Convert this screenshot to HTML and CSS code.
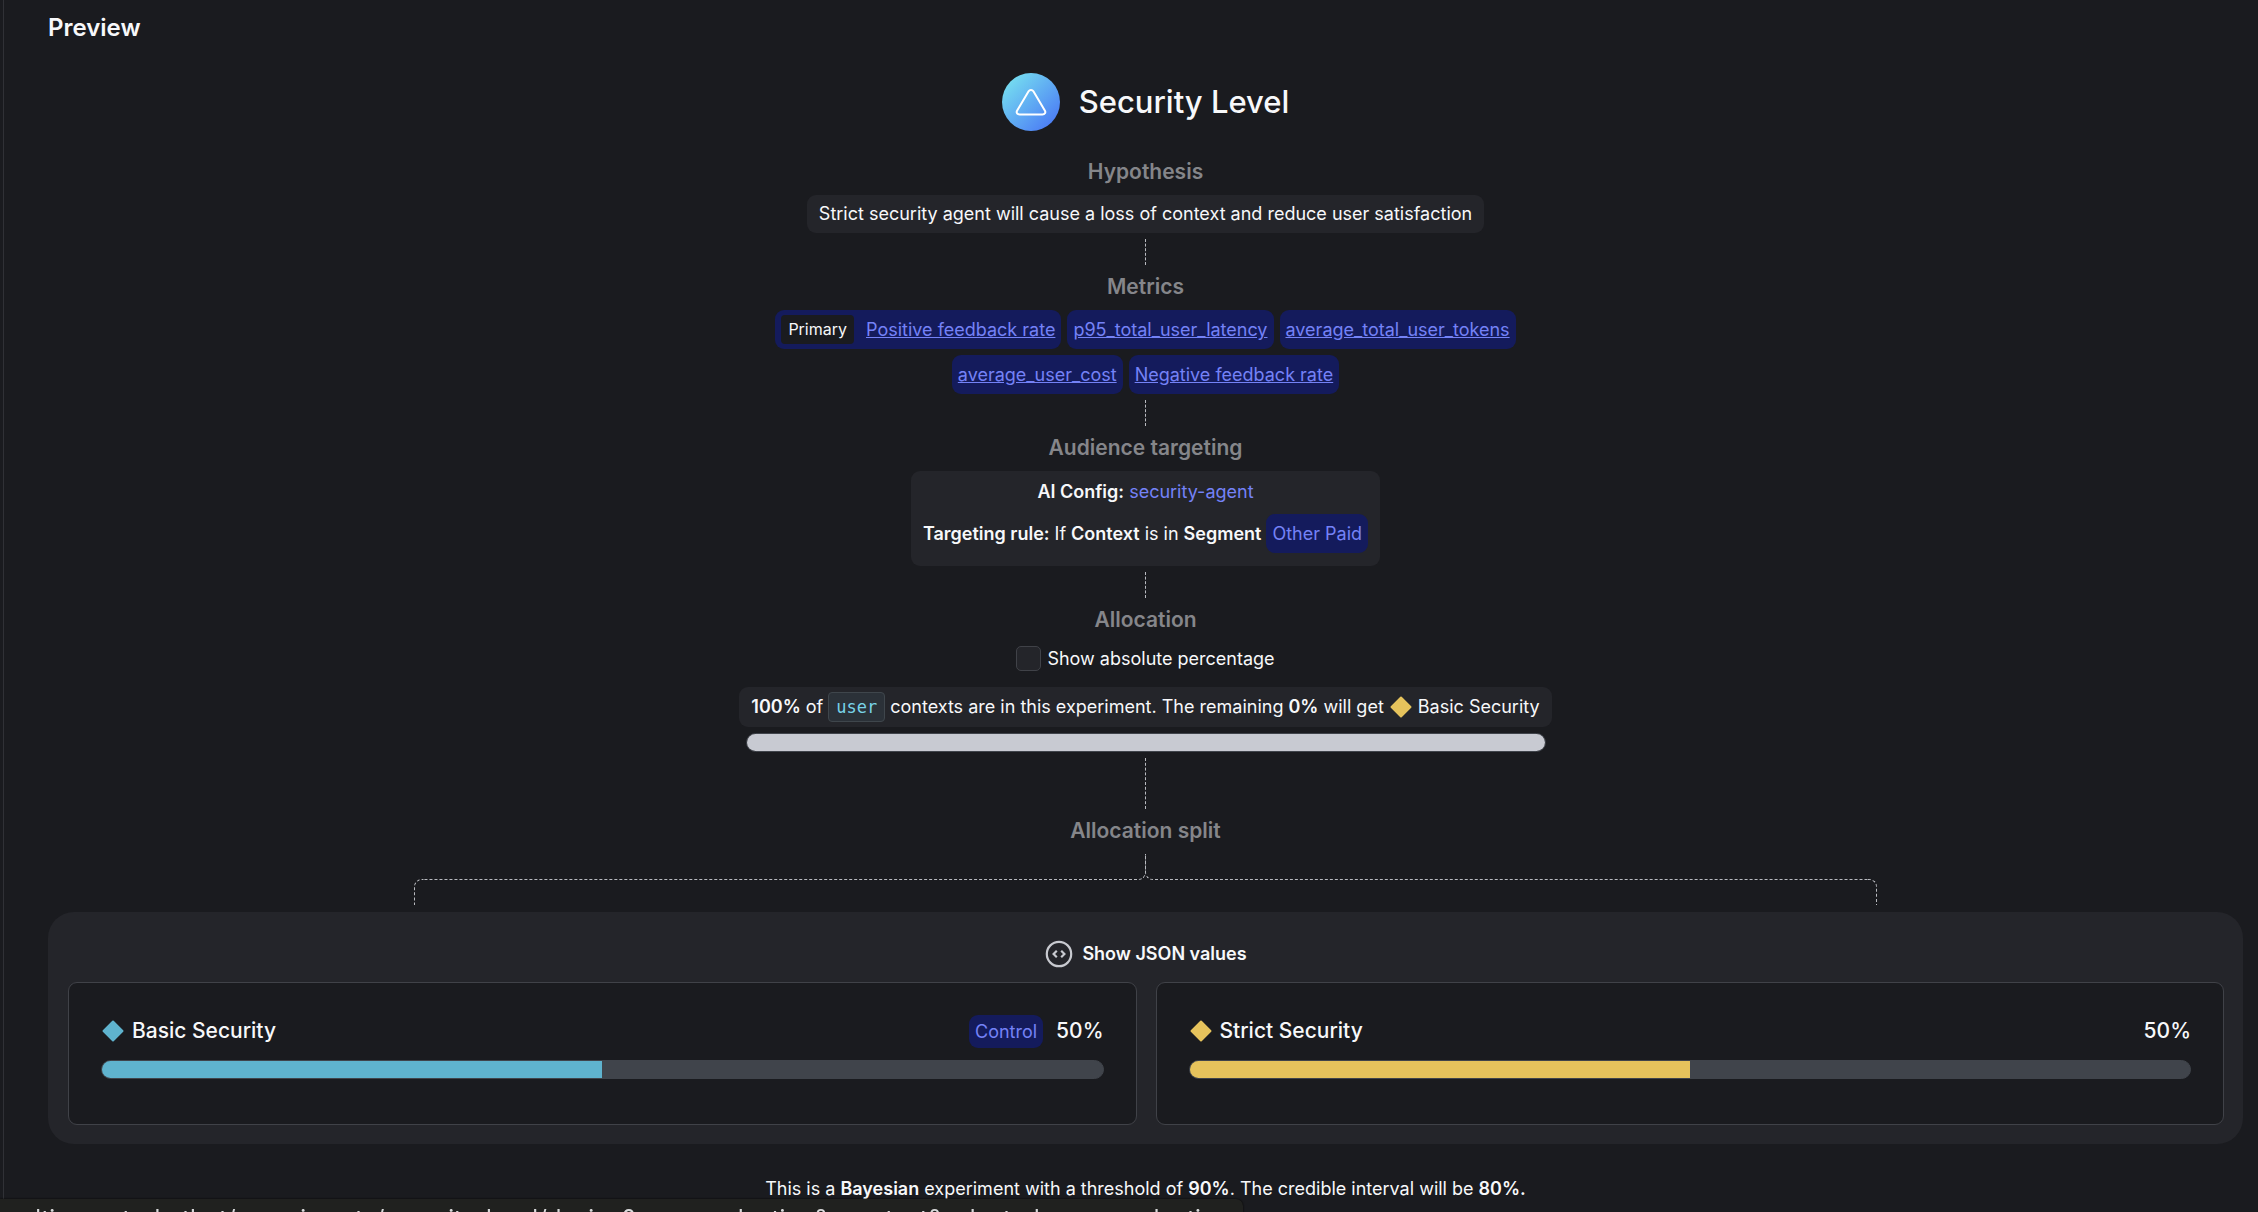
FILE: index.html
```html
<!DOCTYPE html>
<html lang="en">
<head>
  <meta charset="utf-8">
  <meta name="viewport" content="width=device-width, initial-scale=1">
  <title>Security Level – Preview</title>
  <link rel="stylesheet" href="styles.css">
</head>
<body>
  <main class="preview">
    <h2 class="preview-label">Preview</h2>

    <header class="title">
      <svg class="title-icon" viewBox="0 0 58 58" aria-hidden="true">
        <defs>
          <linearGradient id="badge" x1="0.1" y1="0.1" x2="0.9" y2="0.9">
            <stop offset="0" stop-color="#76dff0"/>
            <stop offset="1" stop-color="#4b7bf5"/>
          </linearGradient>
        </defs>
        <circle cx="29" cy="29" r="29" fill="url(#badge)"/>
        <path d="M26.6 18.3 15.2 37.400c-1.300 2.200.1 4.200 2.400 4.200h22.800c2.300 0 3.700-2 2.400-4.200L31.400 18.300c-1.100-1.900-3.700-1.900-4.800 0z" fill="none" stroke="#fff" stroke-width="2"/>
      </svg>
      <h1 class="title-text">Security Level</h1>
    </header>

    <h3 class="heading">Hypothesis</h3>
    <p class="box">Strict security agent will cause a loss of context and reduce user satisfaction</p>
    <div class="connector"></div>

    <h3 class="heading">Metrics</h3>
    <ul class="metrics">
      <li class="chip"><span class="primary">Primary</span><a class="metric-link" href="#">Positive feedback rate</a></li>
      <li class="chip"><a class="metric-link" href="#">p95_total_user_latency</a></li>
      <li class="chip"><a class="metric-link" href="#">average_total_user_tokens</a></li>
      <li class="chip"><a class="metric-link" href="#">average_user_cost</a></li>
      <li class="chip"><a class="metric-link" href="#">Negative feedback rate</a></li>
    </ul>
    <div class="connector"></div>

    <h3 class="heading">Audience targeting</h3>
    <div class="audience">
      <p class="audience-line"><b>AI Config:</b> <a class="config-link" href="#">security-agent</a></p>
      <p class="rule"><b>Targeting rule:</b><span>If</span><b>Context</b><span>is in</span><b>Segment</b><span class="chip">Other Paid</span></p>
    </div>
    <div class="connector"></div>

    <h3 class="heading">Allocation</h3>
    <label class="check"><input class="check-box" type="checkbox"> Show absolute percentage</label>
    <p class="box allocation"><b>100%</b><span>of</span><code class="context-kind">user</code><span>contexts are in this experiment. The remaining <b>0%</b> will get</span><svg class="diamond diamond-yellow" viewBox="0 0 24 24" aria-hidden="true"><path d="M12 2.500 21.500 12 12 21.500 2.500 12z"/></svg><span>Basic Security</span></p>
    <div class="bar bar-total"><div class="bar-fill fill-grey" style="width:100%"></div></div>
    <div class="connector connector-long"></div>

    <h3 class="heading">Allocation split</h3>
    <div class="bracket">
      <div class="corner corner-left"></div>
      <div class="arm arm-left"></div>
      <div class="arm arm-right"></div>
      <div class="corner corner-right"></div>
    </div>

    <section class="variations">
      <button class="json-button" type="button">
        <svg class="json-icon" viewBox="0 0 28 28" fill="none" stroke="#c8cad0" aria-hidden="true">
          <circle cx="14" cy="14" r="12.200" stroke-width="2.200"/>
          <path d="M11.800 10.800 8.600 14l3.200 3.200M16.200 10.800 19.400 14l-3.200 3.200" stroke-width="2.200"/>
        </svg>
        Show JSON values
      </button>
      <div class="cards">
        <article class="card">
          <div class="card-head">
            <svg class="diamond diamond-blue" viewBox="0 0 24 24" aria-hidden="true"><path d="M12 2.500 21.500 12 12 21.500 2.500 12z"/></svg>
            <h4 class="card-name">Basic Security</h4>
            <span class="chip chip-small">Control</span>
            <span class="percent">50%</span>
          </div>
          <div class="bar"><div class="bar-fill fill-blue" style="width:50%"></div></div>
        </article>
        <article class="card">
          <div class="card-head">
            <svg class="diamond diamond-yellow" viewBox="0 0 24 24" aria-hidden="true"><path d="M12 2.500 21.500 12 12 21.500 2.500 12z"/></svg>
            <h4 class="card-name">Strict Security</h4>
            <span class="percent">50%</span>
          </div>
          <div class="bar"><div class="bar-fill fill-yellow" style="width:50%"></div></div>
        </article>
      </div>
    </section>

    <p class="summary">This is a <b>Bayesian</b> experiment with a threshold of <b>90%</b>. The credible interval will be <b>80%.</b></p>
  </main>
  <div class="link-status">multi-agent-chatbot/experiments/security-level/design?env=production&amp;env=test&amp;selected-env=production</div>
</body>
</html>
```
FILE: styles.css
```css
:root {
  --bg: #1a1b1f;
  --surface: #24252a;
  --border: #404248;
  --text: #f7f8fa;
  --muted: #85868a;
  --link: #7482f7;
  --chip: #141b5c;
  --track: #40444b;
  --line: #b9bbc0;
}

* {
  box-sizing: border-box;
}

body {
  margin: 0;
  height: 100vh;
  overflow: hidden;
  background: var(--bg);
  color: var(--text);
  font: 400 18px/24px Inter, "Liberation Sans", sans-serif;
}

h1, h2, h3, h4, p, ul {
  margin: 0;
  padding: 0;
}

b {
  font-weight: 600;
}

.preview {
  display: flex;
  flex-direction: column;
  align-items: center;
  min-height: 100vh;
  margin-left: 3px;
  padding: 12px 15px 0 44px;
  border-left: 1px solid #303136;
}

.preview-label {
  align-self: flex-start;
  font-size: 24px;
  line-height: 32px;
  font-weight: 600;
}

.title {
  display: flex;
  align-items: center;
  gap: 19px;
  margin: 29px 0 19px;
}

.title-icon {
  width: 58px;
  height: 58px;
}

.title-text {
  font-size: 31px;
  line-height: 40px;
  font-weight: 500;
}

.heading {
  margin: 9px 0 10px;
  color: var(--muted);
  font-size: 21px;
  line-height: 26px;
  font-weight: 600;
}

.box {
  padding: 7px 12px;
  border-radius: 9px;
  background: var(--surface);
}

.connector {
  height: 26px;
  margin-top: 6px;
  border-left: 1px dashed var(--line);
}

.connector-long {
  height: 51px;
}

.metrics {
  display: flex;
  flex-wrap: wrap;
  justify-content: center;
  gap: 6px;
  max-width: 800px;
  list-style: none;
}

.chip {
  display: flex;
  align-items: center;
  padding: 7px 6px;
  border-radius: 9px;
  background: var(--chip);
  color: var(--link);
  line-height: 25px;
}

.primary {
  margin: -4px 12px -4px 0;
  padding: 2px 7px;
  border-radius: 4px;
  background: var(--bg);
  color: var(--text);
  font-size: 16px;
}

.metric-link {
  color: var(--link);
  text-decoration: underline;
}

.audience {
  display: flex;
  flex-direction: column;
  align-items: center;
  gap: 10px;
  padding: 9px 12px 13px;
  border-radius: 9px;
  background: var(--surface);
}

.config-link {
  color: var(--link);
  text-decoration: none;
}

.rule,
.allocation {
  display: flex;
  align-items: center;
  gap: 5px;
}

.check {
  display: flex;
  align-items: center;
  gap: 6px;
  margin: 3px 0 16px;
}

.check-box {
  appearance: none;
  width: 25px;
  height: 25px;
  margin: 0;
  border: 1px solid var(--border);
  border-radius: 5px;
  background: var(--surface);
}

.allocation {
  padding: 5px 12px;
}

.context-kind {
  padding: 2px 7px;
  border: 1px solid #3f464c;
  border-radius: 4px;
  background: #2b3138;
  color: #78d3e8;
  font: 17px/24px "DejaVu Sans Mono", monospace;
}

.diamond {
  flex: none;
  width: 24px;
  height: 24px;
  stroke-width: 2px;
  stroke-linejoin: round;
}

.diamond-yellow {
  fill: #e6c35c;
  stroke: #e6c35c;
}

.diamond-blue {
  fill: #5fb3ce;
  stroke: #5fb3ce;
}

.bar {
  width: 100%;
  height: 19px;
  border: 1px solid var(--track);
  border-radius: 10px;
  background: var(--track);
  overflow: hidden;
}

.bar-total {
  max-width: 800px;
  margin-top: 6px;
}

.bar-fill {
  height: 100%;
}

.fill-grey {
  background: #c8cad2;
}

.fill-blue {
  background: #5fb3ce;
}

.fill-yellow {
  background: #e6c35c;
}

.bracket {
  display: flex;
  width: calc(100% * 2 / 3);
  height: 51px;
}

.arm {
  flex: 1;
  height: 26px;
  border: 0 dashed var(--line);
  border-bottom-width: 1px;
}

.arm-left {
  border-right-width: 1px;
  border-bottom-right-radius: 8px;
}

.arm-right {
  margin-left: -1px;
  border-left-width: 1px;
  border-bottom-left-radius: 8px;
}

.corner {
  align-self: flex-end;
  width: 9px;
  height: 26px;
  border: 0 dashed var(--line);
  border-top-width: 1px;
}

.corner-left {
  border-left-width: 1px;
  border-top-left-radius: 8px;
}

.corner-right {
  border-right-width: 1px;
  border-top-right-radius: 8px;
}

.variations {
  display: flex;
  flex-direction: column;
  align-items: center;
  width: 100%;
  margin-top: 7px;
  padding: 26px 19px 19px 20px;
  border-radius: 26px;
  background: var(--surface);
}

.json-button {
  display: flex;
  align-items: center;
  gap: 9px;
  margin-bottom: 12px;
  padding: 2px 0;
  border: 0;
  background: none;
  color: var(--text);
  font: inherit;
  font-weight: 600;
  line-height: 28px;
}

.json-icon {
  width: 28px;
  height: 28px;
}

.cards {
  display: grid;
  grid-template-columns: 1fr 1fr;
  gap: 19px;
  width: 100%;
}

.card {
  padding: 32px 32px 45px;
  border: 1px solid var(--border);
  border-radius: 9px;
  background: var(--bg);
}

.card-head {
  display: flex;
  align-items: center;
  gap: 7px;
  height: 32px;
  margin-bottom: 13px;
}

.card-name {
  flex: 1;
  font-size: 21px;
  font-weight: 500;
}

.chip-small {
  padding: 4px 6px;
}

.percent {
  margin-left: 6px;
  font-size: 21px;
  font-weight: 500;
}

.summary {
  margin-top: 33px;
}

.link-status {
  position: fixed;
  top: calc(100vh - 13px);
  left: 0;
  padding: 5px 13px 8px 0;
  border-top-right-radius: 7px;
  background: #20211f;
  box-shadow: 0 0 2px #000;
  color: #d8d9da;
  font-size: 24px;
  line-height: 30px;
  white-space: nowrap;
}
```
